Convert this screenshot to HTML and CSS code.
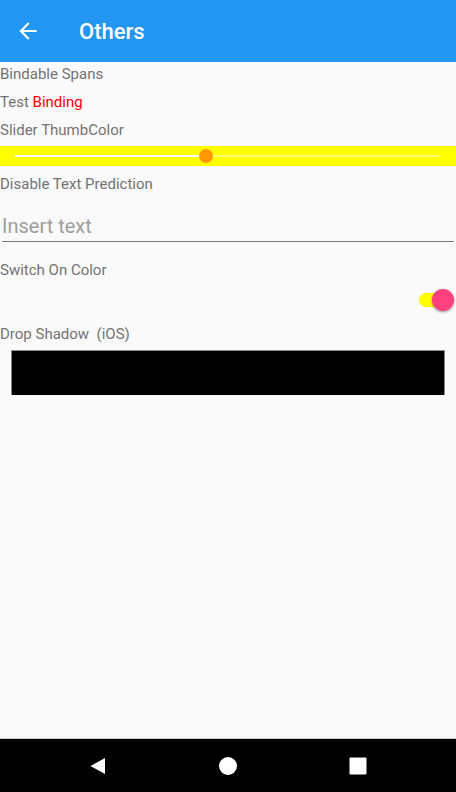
FILE: index.html
```html
<!DOCTYPE html>
<html>
<head>
<meta charset="utf-8">
<link rel="stylesheet" href="styles.css">
</head>
<body>
<div class="screen">
  <header class="appbar">
    <svg class="back" viewBox="0 0 24 24" width="26" height="26"><path fill="#fff" d="M20 11H7.83l5.59-5.59L12 4l-8 8 8 8 1.41-1.41L7.83 13H20v-2z"/></svg>
    <span class="title">Others</span>
  </header>
  <main class="content">
    <div class="label">Bindable Spans</div>
    <div class="label">Test <span class="red">Binding</span></div>
    <div class="label">Slider ThumbColor</div>
    <div class="slider">
      <div class="track">
        <div class="fill"></div>
        <div class="thumb"></div>
        <div class="rest"></div>
      </div>
    </div>
    <div class="label">Disable Text Prediction</div>
    <div class="entry"><span class="placeholder">Insert text</span></div>
    <div class="label">Switch On Color</div>
    <div class="switch-row">
      <div class="switch"><div class="sw-track"></div><div class="sw-thumb"></div></div>
    </div>
    <div class="label">Drop Shadow&nbsp; (iOS)</div>
    <div class="shadowbox"></div>
  </main>
  <nav class="navbar">
    <svg width="18" height="18" viewBox="0 0 18 18"><path fill="#fff" d="M16 1 L16 17 L1.5 9 Z"/></svg>
    <svg width="18" height="18" viewBox="0 0 18 18"><circle cx="9" cy="9" r="9" fill="#fff"/></svg>
    <svg width="18" height="18" viewBox="0 0 18 18"><rect x="0.5" y="0.5" width="17" height="17" rx="1" fill="#fff"/></svg>
  </nav>
</div>
</body>
</html>
```
FILE: styles.css
```css
* { box-sizing: border-box; }
html, body { margin: 0; padding: 0; }
body { font-family: Roboto, "Noto Sans", sans-serif; background: #fafafa; }
.screen { width: 456px; height: 792px; display: flex; flex-direction: column; overflow: hidden; }
.appbar { height: 62px; background: #2196f3; display: flex; align-items: center; flex-shrink: 0; }
.back { margin-left: 15px; }
.title { color: #fff; font-size: 22px; font-weight: 500; margin-left: 38px; padding-top: 1px; }
.content { flex: 1; display: flex; flex-direction: column; gap: 6px; }
.label { height: 22px; padding-top: 1px; line-height: 22px; font-size: 15px; color: #737373; }
.red { color: #ff0000; }
.slider { height: 20px; background: #ffff00; display: flex; align-items: center; padding: 0 16px 0 15px; }
.track { flex: 1; display: flex; align-items: center; height: 14px; }
.fill { width: 184px; height: 2px; background: #fff; }
.thumb { width: 14px; height: 14px; border-radius: 50%; background: #ff9800; }
.rest { flex: 1; height: 2px; background: rgba(255,255,255,0.45); }
.entry { height: 42px; margin: 0 2px 10px; border-bottom: 1px solid #7a7a7a; display: flex; align-items: flex-end; padding-bottom: 3px; }
.placeholder { font-size: 20px; line-height: 23px; color: #9e9e9e; }
.switch-row { height: 30px; display: flex; justify-content: flex-end; align-items: center; padding-right: 2px; padding-bottom: 2px; }
.switch { position: relative; width: 36px; height: 22px; }
.sw-track { position: absolute; left: 1px; top: 4px; width: 33px; height: 14px; border-radius: 7px; background: #ffff00; }
.sw-thumb { position: absolute; right: 0; top: 0; width: 22px; height: 22px; border-radius: 50%; background: #ff4081; box-shadow: 0 1px 3px rgba(0,0,0,0.4); }
.shadowbox { margin: 0 11px; height: 45px; background: #000; border: 1px solid #8a8a8a; border-bottom: none; }
.navbar { height: 54px; flex-shrink: 0; background: #000; border-top: 1px solid #c8c8c8; display: flex; justify-content: center; align-items: center; gap: 112px; }
```
